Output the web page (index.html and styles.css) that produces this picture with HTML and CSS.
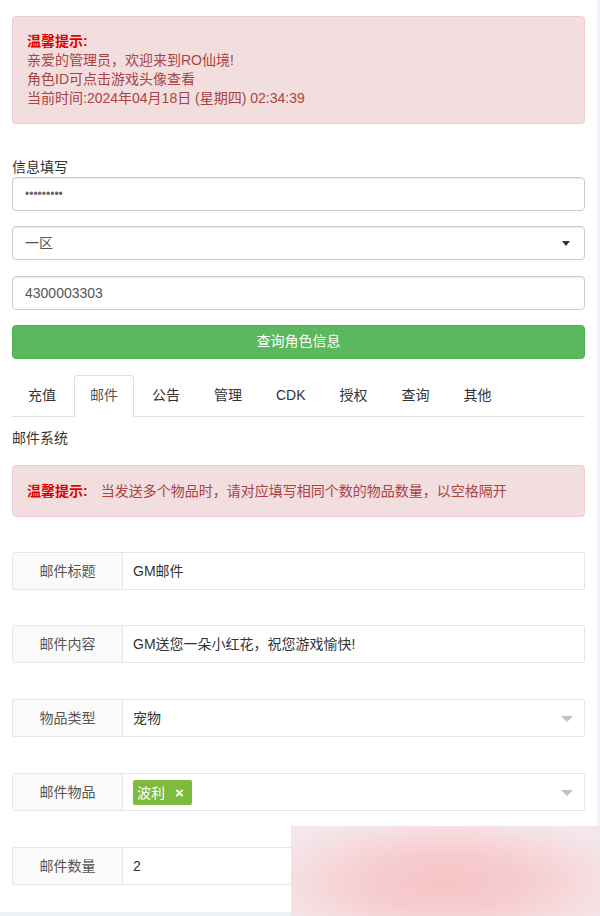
FILE: index.html
```html
<!DOCTYPE html>
<html lang="zh-CN">
<head>
  <meta charset="UTF-8">
  <meta name="viewport" content="width=device-width, initial-scale=1.0">
  <title>GM管理</title>
  <link rel="stylesheet" href="styles.css">
</head>
<body>
  <div class="page">
    <div class="alert alert-top">
      <strong class="tip-title">温馨提示:</strong><br>
      亲爱的管理员，欢迎来到RO仙境!<br>
      角色ID可点击游戏头像查看<br>
      当前时间:2024年04月18日 (星期四) 02:34:39
    </div>

    <label class="field-label">信息填写</label>
    <input class="form-control pwd" type="password" value="123456789">
    <div class="form-control select-box">
      <span>一区</span>
      <span class="caret"></span>
    </div>
    <input class="form-control" type="text" value="4300003303">
    <button class="btn-query">查询角色信息</button>

    <ul class="nav-tabs">
      <li>充值</li>
      <li class="active">邮件</li>
      <li>公告</li>
      <li>管理</li>
      <li>CDK</li>
      <li>授权</li>
      <li>查询</li>
      <li>其他</li>
    </ul>

    <p class="section-title">邮件系统</p>

    <div class="alert alert-mail">
      <strong class="tip-title inline">温馨提示:</strong>当发送多个物品时，请对应填写相同个数的物品数量，以空格隔开
    </div>

    <div class="input-group">
      <span class="addon">邮件标题</span>
      <div class="group-field">GM邮件</div>
    </div>
    <div class="input-group">
      <span class="addon">邮件内容</span>
      <div class="group-field">GM送您一朵小红花，祝您游戏愉快!</div>
    </div>
    <div class="input-group">
      <span class="addon">物品类型</span>
      <div class="group-field">宠物<span class="arrow"></span></div>
    </div>
    <div class="input-group">
      <span class="addon">邮件物品</span>
      <div class="group-field"><span class="tag">波利 <b>×</b></span><span class="arrow"></span></div>
    </div>
    <div class="input-group">
      <span class="addon">邮件数量</span>
      <div class="group-field">2</div>
    </div>
  </div>

  <div class="blur-mark"></div>
</body>
</html>
```

FILE: styles.css
```css
* {
  box-sizing: border-box;
}

html,
body {
  height: 100%;
}

body {
  margin: 0;
  position: relative;
  overflow: hidden;
  background-color: #eef1f6;
  font-family: "Liberation Sans", "Noto Sans CJK SC", sans-serif;
  font-size: 14px;
  line-height: 19px;
  color: #333;
}

.page {
  width: 597px;
  height: 912px;
  overflow: hidden;
  background-color: #fff;
  padding: 16px 12px 0;
}

.alert {
  background-color: #f2dede;
  border: 1px solid #ebccd1;
  border-radius: 4px;
  color: #a94442;
  padding: 15px 15px 15px 14px;
}

.alert-top {
  margin-bottom: 34px;
}

.tip-title {
  color: #e00000;
}

.tip-title.inline {
  margin-right: 13px;
}

.field-label {
  display: block;
  height: 19px;
}

.form-control {
  display: block;
  width: 100%;
  height: 34px;
  margin: 0 0 15px;
  padding: 6px 12px;
  border: 1px solid #ccc;
  border-radius: 4px;
  font-family: inherit;
  font-size: 14px;
  color: #555;
  background-color: #fff;
  box-shadow: inset 0 1px 1px rgba(0, 0, 0, 0.075);
}

.pwd {
  font-size: 12px;
  color: #666;
}

.select-box {
  display: flex;
  align-items: center;
  justify-content: space-between;
  margin-bottom: 16px;
}

.caret {
  width: 0;
  height: 0;
  border-left: 4px solid transparent;
  border-right: 4px solid transparent;
  border-top: 5px solid #333;
  margin-right: 2px;
}

.btn-query {
  display: block;
  width: 100%;
  height: 34px;
  margin-top: 14px;
  border: 1px solid #4cae4c;
  border-radius: 4px;
  background-color: #5cb85c;
  color: #fff;
  font-family: inherit;
  font-size: 14px;
  line-height: 19px;
  padding-bottom: 2px;
}

.nav-tabs {
  list-style: none;
  margin: 16px 0 0;
  padding: 0;
  display: flex;
  border-bottom: 1px solid #ddd;
}

.nav-tabs li {
  padding: 9px 15px 11px;
  margin-right: 2px;
  margin-bottom: -1px;
  line-height: 20px;
  border: 1px solid transparent;
  border-radius: 4px 4px 0 0;
  color: #333;
}

.nav-tabs li.active {
  border-color: #ddd #ddd #fff;
  background-color: #fff;
  color: #555;
}

.section-title {
  margin: 12px 0 17px;
}

.alert-mail {
  padding-top: 16px;
  padding-bottom: 15px;
  margin-bottom: 35px;
}

.input-group {
  display: flex;
  height: 38px;
  margin-bottom: 36px;
  border: 1px solid #e6e6e6;
  border-radius: 2px;
}

.input-group:nth-of-type(4) {
  margin-bottom: 35px;
}

.addon {
  width: 110px;
  flex-shrink: 0;
  display: flex;
  align-items: center;
  justify-content: center;
  background-color: #fafafa;
  border-right: 1px solid #e6e6e6;
  color: #555;
}

.group-field {
  flex: 1;
  display: flex;
  align-items: center;
  padding: 0 10px;
  color: #333;
  position: relative;
}

.arrow {
  position: absolute;
  right: 11px;
  top: 16px;
  width: 0;
  height: 0;
  border-left: 6px solid transparent;
  border-right: 6px solid transparent;
  border-top: 6px solid #c2c2c2;
}

.tag {
  display: inline-block;
  height: 25px;
  line-height: 25px;
  padding: 0 8px 0 4px;
  border-radius: 2px;
  background-color: #7cbb3d;
  color: #fff;
}

.tag b {
  font-size: 15px;
  margin-left: 6px;
}

.blur-mark {
  position: absolute;
  left: 291px;
  top: 826px;
  width: 309px;
  height: 90px;
  background: radial-gradient(ellipse 62% 75% at 50% 62%, #f5c3c6 0%, #f6ccce 40%, #f6dcdf 75%, #f3e7eb 100%);
}
```
